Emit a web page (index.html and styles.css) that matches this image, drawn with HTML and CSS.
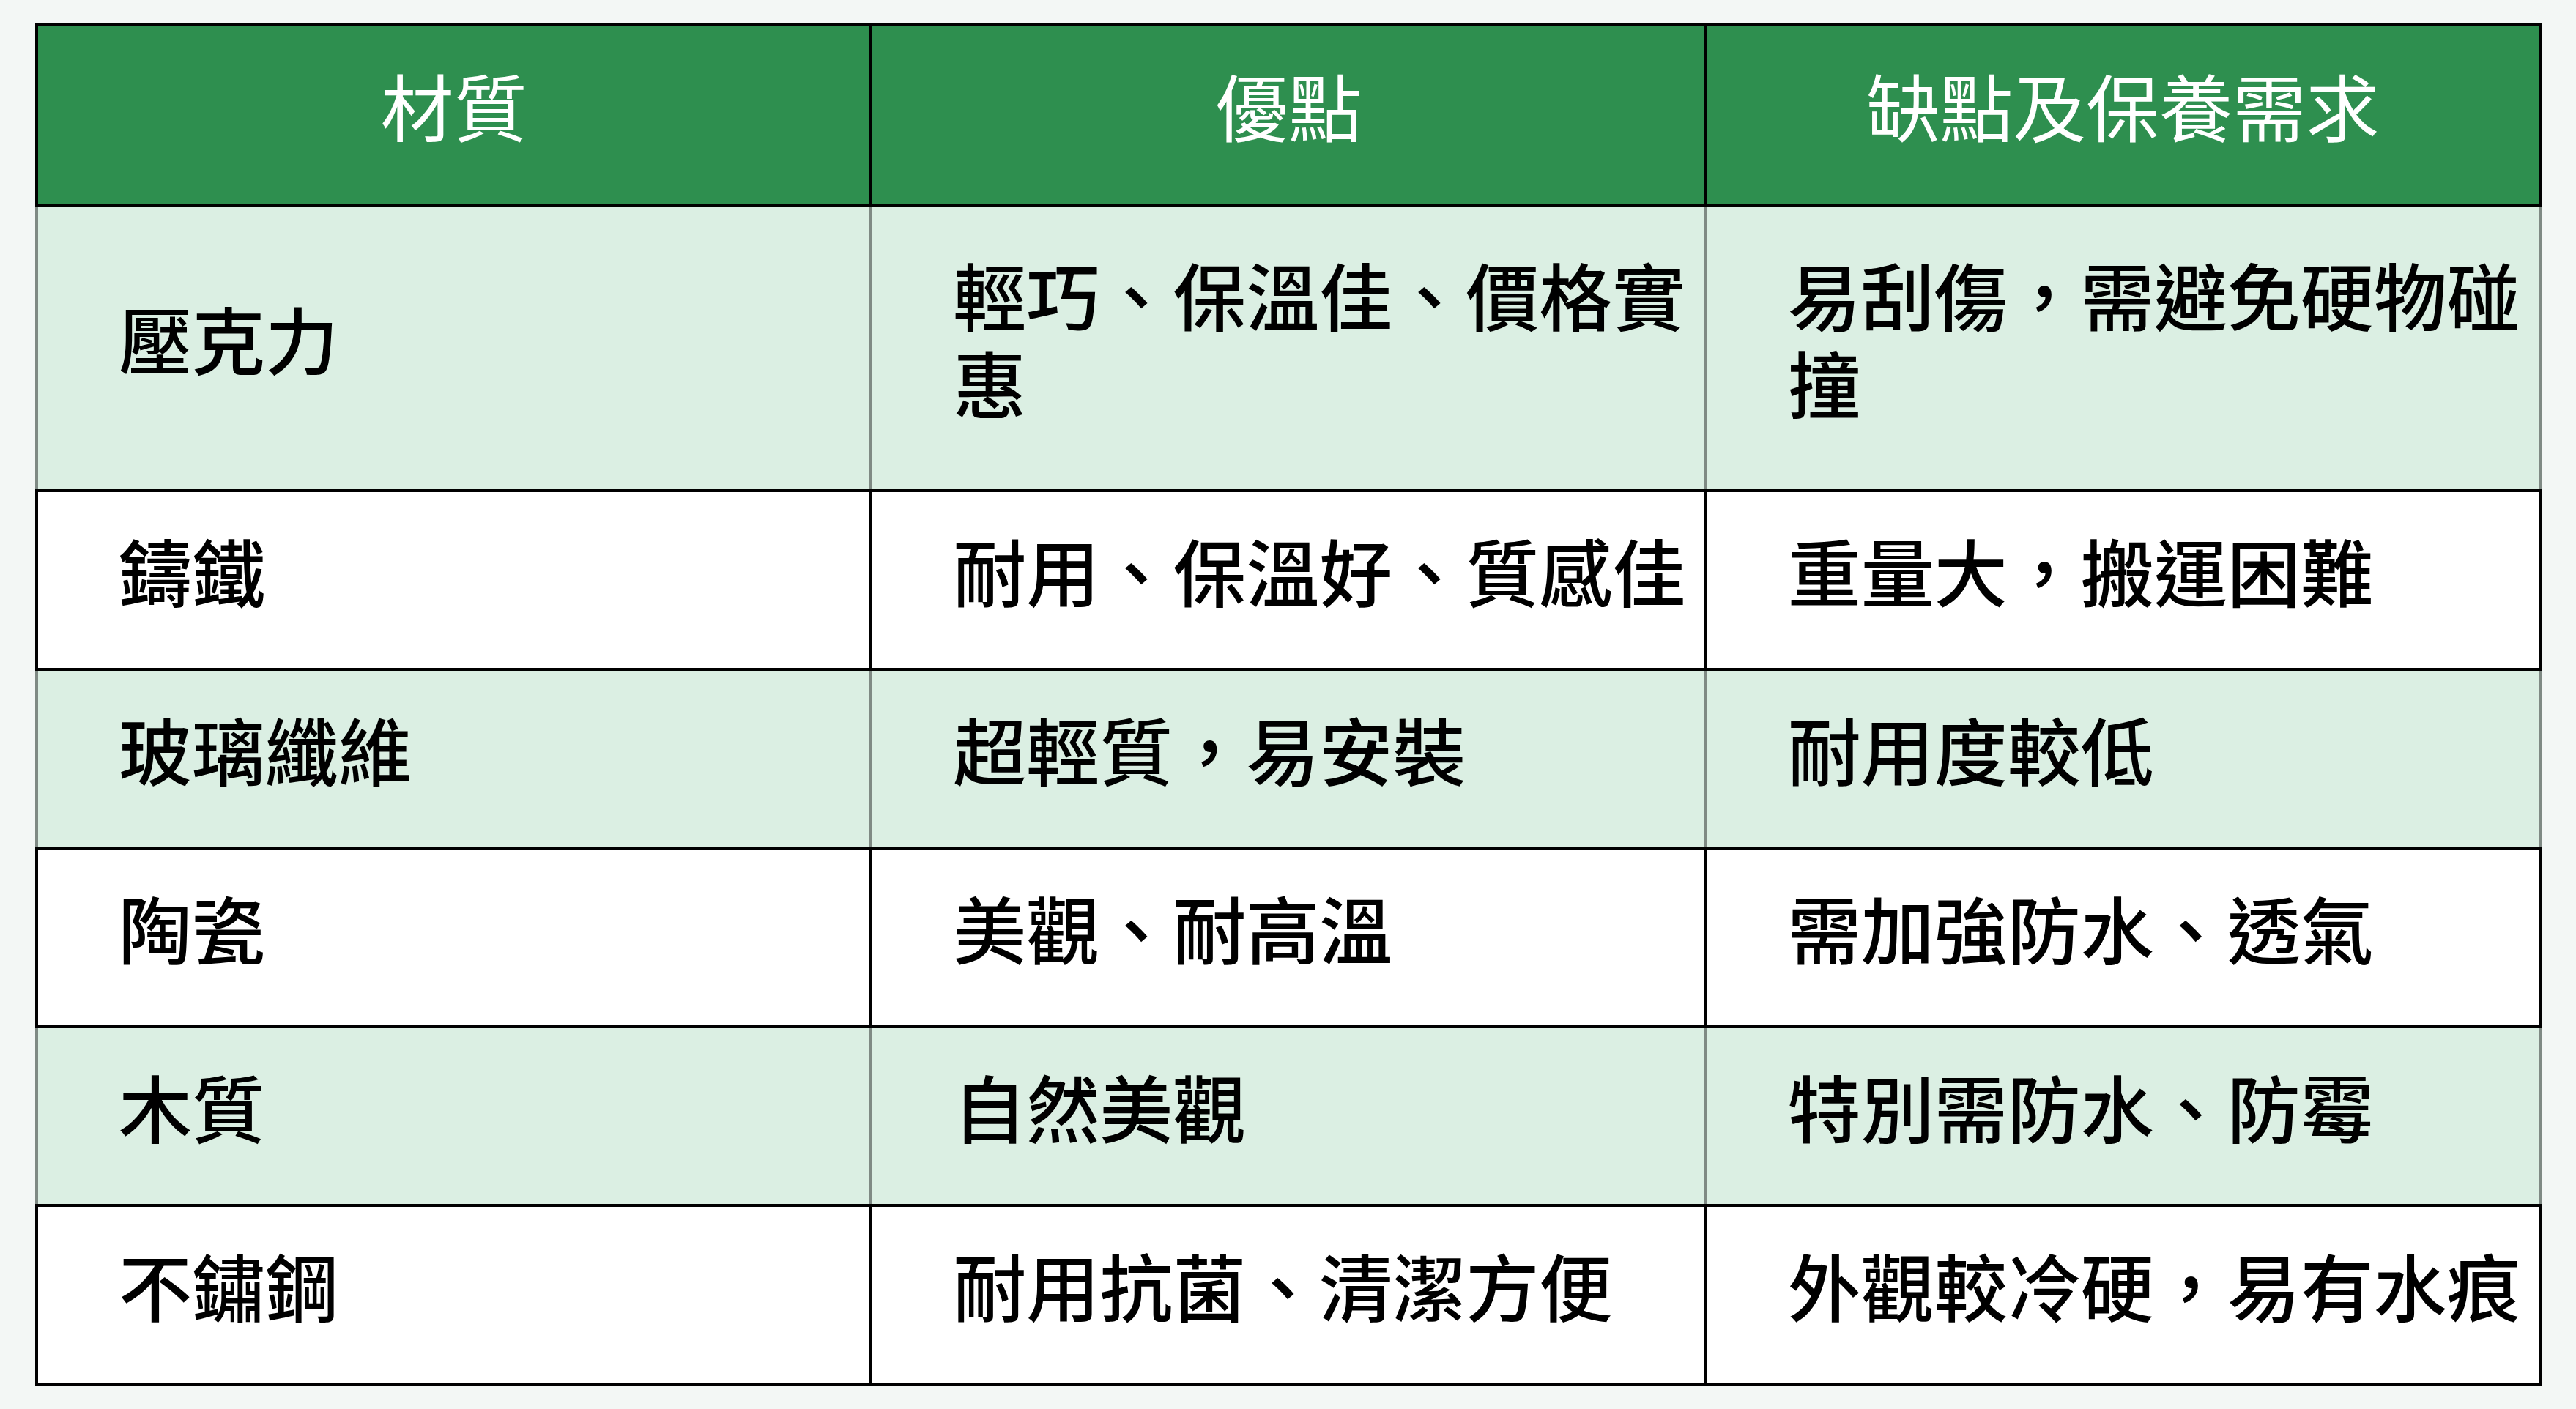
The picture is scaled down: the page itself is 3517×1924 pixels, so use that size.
FILE: index.html
```html
<!DOCTYPE html>
<html lang="zh-Hant">
<head>
<meta charset="utf-8">
<title>材質比較</title>
<link rel="stylesheet" href="styles.css">
</head>
<body>
<table class="compare">
  <thead>
    <tr class="head-row">
      <th>材質</th>
      <th>優點</th>
      <th>缺點及保養需求</th>
    </tr>
  </thead>
  <tbody>
    <tr class="row-tint row-tall">
      <td>壓克力</td>
      <td>輕巧、保溫佳、價格實惠</td>
      <td>易刮傷，需避免硬物碰撞</td>
    </tr>
    <tr class="row-plain">
      <td>鑄鐵</td>
      <td>耐用、保溫好、質感佳</td>
      <td>重量大，搬運困難</td>
    </tr>
    <tr class="row-tint">
      <td>玻璃纖維</td>
      <td>超輕質，易安裝</td>
      <td>耐用度較低</td>
    </tr>
    <tr class="row-plain">
      <td>陶瓷</td>
      <td>美觀、耐高溫</td>
      <td>需加強防水、透氣</td>
    </tr>
    <tr class="row-tint">
      <td>木質</td>
      <td>自然美觀</td>
      <td>特別需防水、防霉</td>
    </tr>
    <tr class="row-plain">
      <td>不鏽鋼</td>
      <td>耐用抗菌、清潔方便</td>
      <td>外觀較冷硬，易有水痕</td>
    </tr>
  </tbody>
</table>
</body>
</html>
```

FILE: styles.css
```css
html, body {
  margin: 0;
  padding: 0;
  background: #f3f7f5;
}

body {
  padding: 32px 47px 0 48px;
  font-family: "Noto Sans CJK TC", "Noto Sans CJK SC", sans-serif;
  color: #000;
}

.compare {
  width: 3422px;
  table-layout: fixed;
  border-collapse: collapse;
  border: 4px solid #000;
  font-size: 100px;
  line-height: 120px;
}

.compare th,
.compare td {
  border: 4px solid #000;
  vertical-align: middle;
}

.compare th {
  background: #2e8f4f;
  color: #fff;
  font-weight: 400;
  text-align: center;
  height: 214px;
  padding: 0 0 28px 0;
}

.compare td {
  text-align: left;
  font-weight: 500;
  height: 212px;
  padding: 0 20px 28px 110px;
}

.row-tint td {
  background: #dbefe3;
  border-left-color: #7f8a84;
  border-right-color: #7f8a84;
}

.row-tall td {
  height: 358px;
}

.row-plain td {
  background: #fff;
}
```
